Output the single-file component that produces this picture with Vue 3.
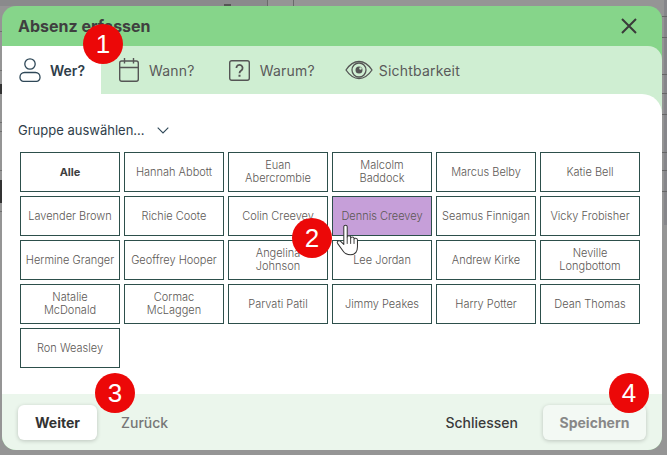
<script setup>
const people = [
  { name: 'Alle', all: true },
  { name: 'Hannah Abbott' }, { name: 'Euan\nAbercrombie' }, { name: 'Malcolm\nBaddock' },
  { name: 'Marcus Belby' }, { name: 'Katie Bell' }, { name: 'Lavender Brown' },
  { name: 'Richie Coote' }, { name: 'Colin Creevey' }, { name: 'Dennis Creevey', on: true },
  { name: 'Seamus Finnigan' }, { name: 'Vicky Frobisher' }, { name: 'Hermine Granger' },
  { name: 'Geoffrey Hooper' }, { name: 'Angelina\nJohnson' }, { name: 'Lee Jordan' },
  { name: 'Andrew Kirke' }, { name: 'Neville\nLongbottom' }, { name: 'Natalie\nMcDonald' },
  { name: 'Cormac\nMcLaggen' }, { name: 'Parvati Patil' }, { name: 'Jimmy Peakes' },
  { name: 'Harry Potter' }, { name: 'Dean Thomas' }, { name: 'Ron Weasley' }
]
</script>

<template>
  <div class="page">
    <section class="dialog">
      <header class="head">
        <h1>Absenz erfassen</h1>
        <svg class="close" width="18" height="18" viewBox="0 0 18 18"><path d="M2 2L16 16M16 2L2 16" fill="none" stroke="#3a3a3a" stroke-width="2"/></svg>
      </header>
      <nav class="tabs">
        <div class="tab active">
          <svg width="22" height="24" viewBox="0 0 22 24" fill="none" stroke="#2f4858" stroke-width="1.300"><circle cx="11" cy="6" r="5.200"/><path d="M4.500 23.300h13a3.500 3.500 0 0 0 3.500-3.500v-.8a4.500 4.500 0 0 0-4.500-4.500h-11.000a4.500 4.500 0 0 0-4.500 4.500v.8a3.500 3.500 0 0 0 3.500 3.500z"/></svg>
          <span>Wer?</span>
        </div>
        <div class="tab t2">
          <svg width="20" height="24" viewBox="0 0 20 24" fill="none" stroke="#555" stroke-width="1.400"><rect x=".7" y="3" width="18.600" height="20.300" rx="2"/><path d="M.7 9.500h18.600M5.500 0v5.500M14.500 0v5.500"/></svg>
          <span>Wann?</span>
        </div>
        <div class="tab t3">
          <svg width="21" height="21" viewBox="0 0 21 21" fill="none" stroke="#555" stroke-width="1.400"><rect x=".7" y=".7" width="19.600" height="19.600" rx="2"/><path d="M7.400 8a3.100 3.100 0 1 1 4.800 2.600c-1.200.8-1.700 1.400-1.700 2.700" stroke-width="1.800"/><path d="M10.500 14.800v2" stroke-width="2"/></svg>
          <span>Warum?</span>
        </div>
        <div class="tab t4">
          <svg width="28" height="20" viewBox="0 0 28 20" fill="none" stroke="#555" stroke-width="1.300"><path d="M1 10C5 4 9 1.500 14 1.500S23 4 27 10c-4 6-8 8.500-13 8.500S5 16 1 10z"/><circle cx="14" cy="10" r="7"/><circle cx="14" cy="10" r="3.500" fill="#555" stroke="none"/><circle cx="15.500" cy="8.500" r="1.200" fill="#cfeed2" stroke="none"/></svg>
          <span>Sichtbarkeit</span>
        </div>
      </nav>
      <div class="well">
        <div class="body">
          <div class="group">
            <span>Gruppe auswählen...</span>
            <svg width="12" height="7" viewBox="0 0 12 7"><path d="M.700.700L6 6l5.300-5.300" fill="none" stroke="#2f4858" stroke-width="1.100"/></svg>
          </div>
          <div class="grid">
            <button v-for="p in people" :key="p.name" class="cell" :class="{ all: p.all, on: p.on }">{{ p.name }}</button>
          </div>
        </div>
      </div>
      <footer class="foot">
        <button class="btn">Weiter</button>
        <span class="back">Zurück</span>
        <span class="close-text">Schliessen</span>
        <button class="btn save">Speichern</button>
      </footer>
      <span class="pin p1">1</span>
      <span class="pin p2">2</span>
      <span class="pin p3">3</span>
      <span class="pin p4">4</span>
      <svg class="hand" width="25" height="33" viewBox="0 0 19.500 29"><path d="M6.500 2.500c0-2 3-2 3 0v9c0-1.500 3-1.500 3 0v1c0-1.500 3-1.500 3 0v1c0-1.500 3-1.500 3 .5v6c0 4-2 7-6 7-3 0-5-.5-6.500-3L1 17c-1-1.500 1-3 2.500-2l3 3z" fill="#fff" stroke="#333" stroke-width=".9" stroke-linejoin="round"/><path d="M9.500 11.500v6M12.500 12.500v5M15.500 13.500v4" stroke="#333" stroke-width=".8"/></svg>
    </section>
  </div>
</template>

<style>
body { margin: 0; }
</style>

<style scoped>
.page {
  width: 667px;
  height: 455px;
  background:
    linear-gradient(#666, #666) 662px 16px / 5px 1px no-repeat,
    linear-gradient(#666, #666) 662px 37px / 5px 1px no-repeat,
    linear-gradient(#666, #666) 662px 74px / 5px 1px no-repeat,
    linear-gradient(#666, #666) 662px 93px / 5px 1px no-repeat,
    linear-gradient(#666, #666) 662px 114px / 5px 1px no-repeat,
    linear-gradient(#666, #666) 662px 152px / 5px 1px no-repeat,
    linear-gradient(#666, #666) 662px 170px / 5px 1px no-repeat,
    linear-gradient(#666, #666) 662px 191px / 5px 1px no-repeat,
    linear-gradient(#707070, #707070) 0 31px / 2px 1px no-repeat,
    linear-gradient(#707070, #707070) 0 70px / 2px 1px no-repeat,
    linear-gradient(#333, #333) 0 84px / 2px 10px no-repeat,
    linear-gradient(#707070, #707070) 0 122px / 2px 1px no-repeat,
    linear-gradient(#707070, #707070) 0 131px / 2px 1px no-repeat,
    linear-gradient(#707070, #707070) 0 170px / 2px 1px no-repeat,
    linear-gradient(#333, #333) 0 180px / 2px 23px no-repeat,
    linear-gradient(#707070, #707070) 0 211px / 2px 1px no-repeat,
    linear-gradient(#6a6a6a, #6a6a6a) 267px 0 / 1px 6px no-repeat,
    linear-gradient(#6a6a6a, #6a6a6a) 293px 0 / 1px 6px no-repeat,
    linear-gradient(#555, #555) 224px 4px / 7px 2px no-repeat,
    linear-gradient(#8a8a8c, #8a8a8c) 0 0 / 267px 6px no-repeat,
    linear-gradient(#86868a, #86868a) 664px 0 / 3px 225px no-repeat,
    #959595;
  overflow: hidden;
  padding: 6px 5px 5px 2px;
  box-sizing: border-box;
  font-family: Inter, "Liberation Sans", sans-serif;
}
.dialog {
  position: relative;
  height: 444px;
  border-radius: 14px;
  overflow: hidden;
  background: #86d58a;
  display: flex;
  flex-direction: column;
}
.head {
  height: 40px;
  flex: none;
  display: flex;
  align-items: center;
  justify-content: space-between;
  padding: 0 24px 0 16px;
}
h1 {
  margin: 0;
  font-size: 16px;
  font-weight: 700;
  color: #3f3f3f;
}
.close { display: block; }
.tabs {
  height: 48px;
  flex: none;
  background: #cfeed2;
  display: flex;
  align-items: center;
  border-radius: 0 14px 0 0;
}
.tab {
  display: flex;
  align-items: center;
  gap: 10px;
  font-size: 14px;
  font-weight: 400;
  letter-spacing: .2px;
  color: #5a5a5a;
  height: 100%;
}
.tab.active {
  width: 99px;
  box-sizing: border-box;
  padding: 0 0 0 17px;
  background: #fff;
  gap: 9px;
  color: #2f3e4a;
  font-weight: 600;
  letter-spacing: 0;
}
.t2 { margin-left: 18px; }
.t3 { margin-left: 34px; }
.t4 { margin-left: 30px; gap: 6px; }
.well {
  flex: 1;
  background: #cfeed2;
  display: flex;
}
.body {
  flex: 1;
  background: #fff;
  border-radius: 0 20px 0 0;
  padding: 28px 16px 0 18px;
}
.group {
  display: flex;
  align-items: center;
  gap: 12px;
  height: 16px;
  margin-left: -2px;
  font-size: 13px;
  color: #2f3e4a;
}
.grid {
  display: grid;
  grid-template-columns: repeat(6, 100px);
  grid-auto-rows: 40px;
  gap: 4px;
  margin-top: 14px;
}
.cell {
  border: 1px solid #2d4f4b;
  background: #fff;
  padding: 0;
  font: 300 11px/13px Inter, "Liberation Sans", sans-serif;
  color: #5c5855;
  white-space: pre;
}
.cell.all { font-weight: 700; color: #3f3f3f; }
.cell.on { background: #c69fd9; }
.foot {
  height: 56px;
  flex: none;
  background: #ebf6ec;
  display: flex;
  align-items: center;
  padding: 0 16px;
  font-size: 14px;
  font-weight: 500;
}
.btn {
  width: 79px;
  height: 35px;
  border: 0;
  border-radius: 6px;
  background: #fff;
  box-shadow: 0 1px 4px rgba(0,0,0,.2);
  font: 700 14px Inter, "Liberation Sans", sans-serif;
  color: #333;
}
.back { margin-left: 24px; color: #777; }
.close-text { margin-left: auto; margin-right: 25px; color: #3a3a3a; }
.btn.save { width: 103px; background: #f3f9f4; color: #888; }
.pin {
  position: absolute;
  width: 40px;
  height: 40px;
  border-radius: 50%;
  background: #ec0808;
  color: #fff;
  display: flex;
  align-items: center;
  justify-content: center;
  font: 400 26px "Liberation Sans", sans-serif;
}
.p1 { left: 81px; top: 18px; }
.p2 { left: 290px; top: 212px; }
.p3 { left: 93px; top: 367px; }
.p4 { left: 607px; top: 367px; }
.hand { position: absolute; left: 333px; top: 218px; }
</style>
